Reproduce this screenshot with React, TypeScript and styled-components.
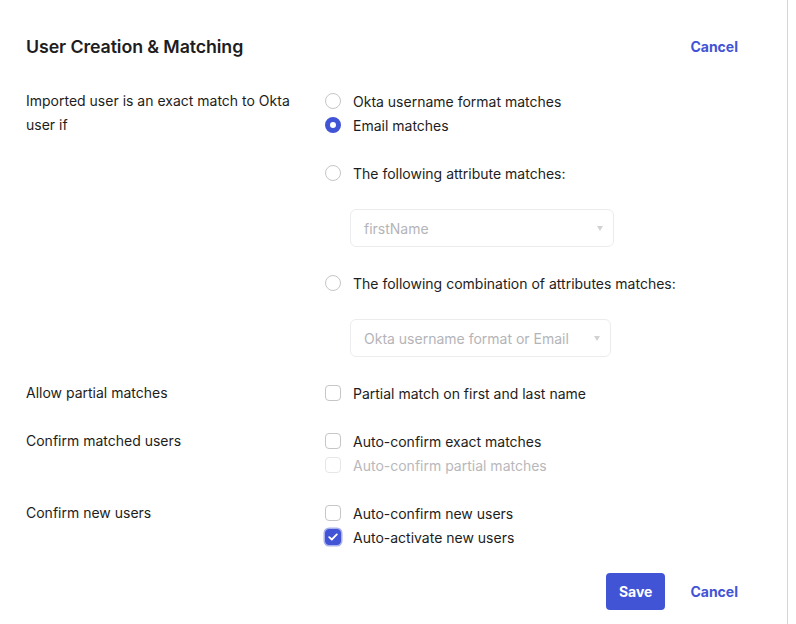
import React from "react";
import styled, { createGlobalStyle } from "styled-components";

const Global = createGlobalStyle`
  html, body { margin: 0; padding: 0; background: #ffffff; }
  body { font-family: Inter, "Noto Sans", sans-serif; color: #1d1d21; -webkit-font-smoothing: antialiased; }
  * { box-sizing: border-box; }
`;

const BLUE = "#4154d6";

const Panel = styled.div`
  width: 788px;
  min-height: 624px;
  border-right: 1px solid #d6d6d6;
  padding: 30px 49px 0 26px;
`;

const Header = styled.div`
  display: flex;
  align-items: center;
  justify-content: space-between;
  height: 32px;
  margin-bottom: 27px;
`;

const Title = styled.h2`
  margin: 0;
  font-size: 17.8px;
  font-weight: 600;
  letter-spacing: -0.1px;
  color: #1d1d21;
`;

const LinkButton = styled.button`
  border: 0;
  background: none;
  padding: 0;
  font-family: inherit;
  font-size: 14px;
  font-weight: 700;
  color: ${BLUE};
  cursor: pointer;
`;

const Form = styled.div`
  display: grid;
  grid-template-columns: 299px 1fr;
  row-gap: 24px;
`;

const Label = styled.div`
  font-size: 14px;
  line-height: 24px;
  padding-right: 20px;
`;

const Options = styled.div`
  display: flex;
  flex-direction: column;
`;

const Group = styled.div`
  display: flex;
  flex-direction: column;
  gap: 24px;
`;

const Option = styled.label<{ $disabled?: boolean }>`
  display: flex;
  align-items: center;
  gap: 12px;
  height: 24px;
  font-size: 14px;
  color: ${(p) => (p.$disabled ? "#b8b8bc" : "#1d1d21")};
`;

const Radio = styled.span<{ $checked?: boolean }>`
  width: 16px;
  height: 16px;
  border-radius: 50%;
  flex: none;
  border: ${(p) => (p.$checked ? `5px solid ${BLUE}` : "1.5px solid #c6c6c8")};
  background: #fff;
`;

const Check = styled.span<{ $checked?: boolean; $disabled?: boolean }>`
  width: 16px;
  height: 16px;
  border-radius: 4px;
  flex: none;
  display: flex;
  align-items: center;
  justify-content: center;
  border: 1.5px solid ${(p) => (p.$checked ? BLUE : p.$disabled ? "#e6e6e8" : "#c6c6c8")};
  background: ${(p) => (p.$checked ? BLUE : "#fff")};
  box-shadow: ${(p) => (p.$checked ? "0 0 0 1.5px #a9b2ee" : "none")};
`;

const Select = styled.div<{ $w: number }>`
  width: ${(p) => p.$w}px;
  height: 38px;
  margin-left: 25px;
  border: 1px solid #ececee;
  border-radius: 6px;
  display: flex;
  align-items: center;
  justify-content: space-between;
  padding: 0 10px 0 13px;
  font-size: 14px;
  color: #b4b4b8;
`;

const Caret = styled.span`
  width: 0;
  height: 0;
  border-left: 3.5px solid transparent;
  border-right: 3.5px solid transparent;
  border-top: 5px solid #d2d2d4;
`;

const Footer = styled.div`
  display: flex;
  justify-content: flex-end;
  align-items: center;
  gap: 25px;
  margin-top: 24px;
`;

const Primary = styled.button`
  height: 37px;
  padding: 0 13px;
  border: 0;
  border-radius: 4px;
  background: ${BLUE};
  color: #fff;
  font-family: inherit;
  font-size: 14px;
  font-weight: 700;
`;

const Tick = () => (
  <svg width="10" height="8" viewBox="0 0 10 8" fill="none">
    <path d="M1.2 4.1 L3.8 6.5 L8.8 1.4" stroke="#fff" strokeWidth="1.8" strokeLinecap="round" strokeLinejoin="round" />
  </svg>
);

export default function App() {
  return (
    <>
      <Global />
      <Panel>
        <Header>
          <Title>User Creation &amp; Matching</Title>
          <LinkButton>Cancel</LinkButton>
        </Header>
        <Form>
          <Label>Imported user is an exact match to Okta user if</Label>
          <Group>
            <Options>
              <Option><Radio />Okta username format matches</Option>
              <Option><Radio $checked />Email matches</Option>
            </Options>
            <Option><Radio />The following attribute matches:</Option>
            <Select $w={264}>firstName<Caret /></Select>
            <Option><Radio />The following combination of attributes matches:</Option>
            <Select $w={261}>Okta username format or Email<Caret /></Select>
          </Group>

          <Label>Allow partial matches</Label>
          <Options>
            <Option><Check />Partial match on first and last name</Option>
          </Options>

          <Label>Confirm matched users</Label>
          <Options>
            <Option><Check />Auto-confirm exact matches</Option>
            <Option $disabled><Check $disabled />Auto-confirm partial matches</Option>
          </Options>

          <Label>Confirm new users</Label>
          <Options>
            <Option><Check />Auto-confirm new users</Option>
            <Option><Check $checked><Tick /></Check>Auto-activate new users</Option>
          </Options>
        </Form>
        <Footer>
          <Primary>Save</Primary>
          <LinkButton>Cancel</LinkButton>
        </Footer>
      </Panel>
    </>
  );
}
